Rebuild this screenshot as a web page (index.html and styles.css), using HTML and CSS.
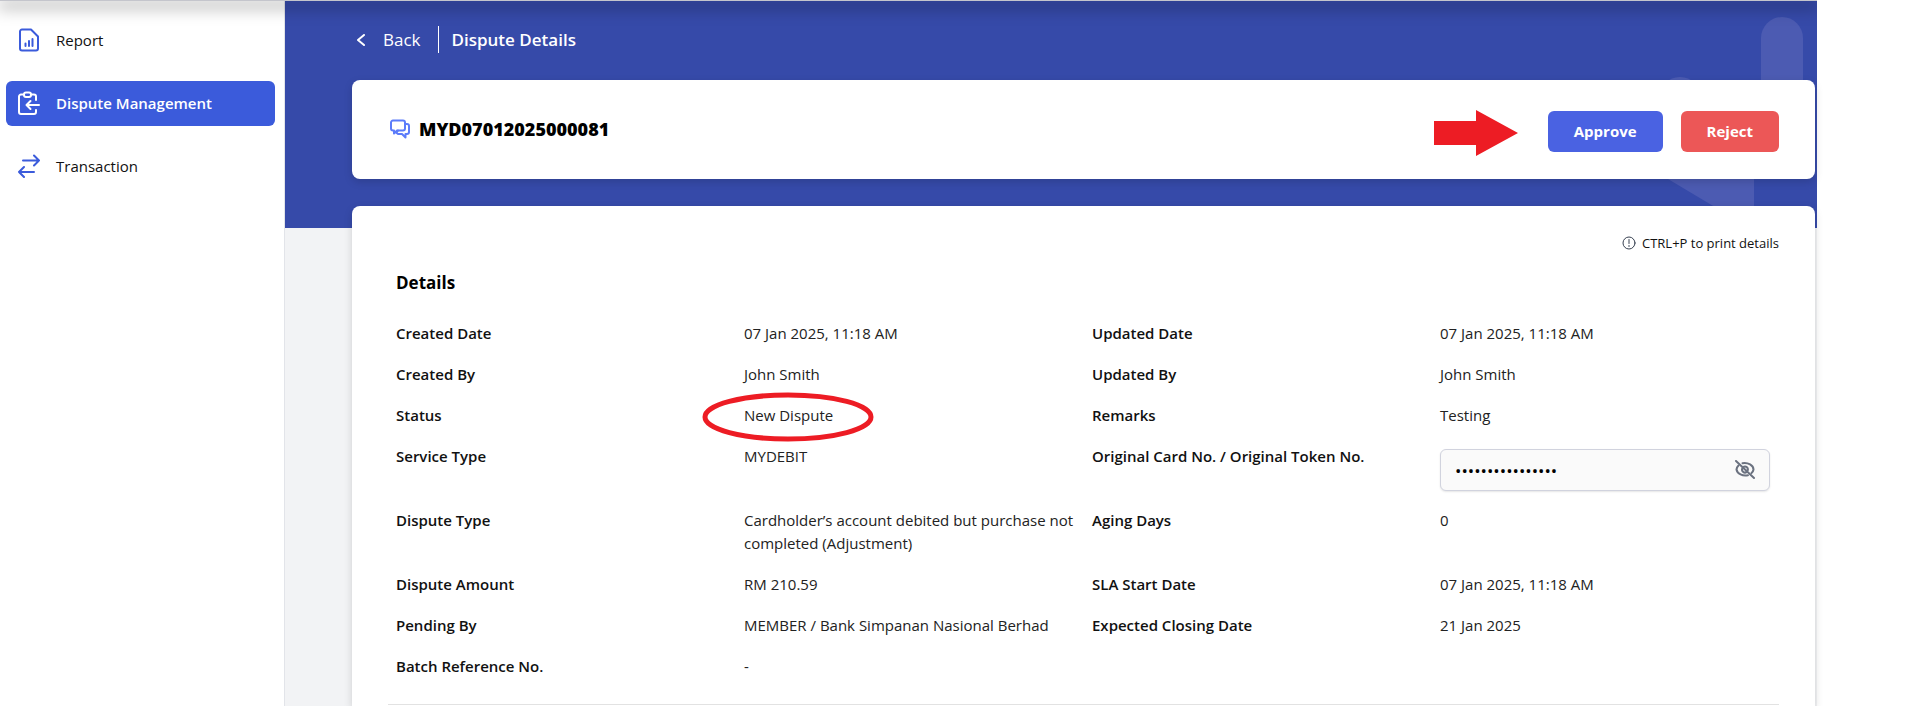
FILE: index.html
```html
<!DOCTYPE html>
<html lang="en">
<head>
  <title>Dispute Details</title>
  <meta charset="UTF-8" />
  <meta name="viewport" content="width=device-width, initial-scale=1.0" />
  <link rel="stylesheet" href="styles.css">
</head>
<body>

  <header class="topbar"></header>

  <div class="layout">
    <!-- Side menu -->
    <nav class="sidebar">
      <a href="#" class="menu-item">
        <svg class="menu-icon" viewBox="0 0 24 24">
          <path d="M5 1.500h9l7 7v12a2 2 0 0 1-2 2H5a2 2 0 0 1-2-2v-17a2 2 0 0 1 2-2z" />
          <path d="M8.500 18v-2.500M12 18v-5M15.500 18v-7" />
        </svg>
        Report
      </a>
      <a href="#" class="menu-item active">
        <svg class="menu-icon" viewBox="0 0 24 24">
          <path d="M7 3.500H4a2 2 0 0 0-2 2V21a2 2 0 0 0 2 2h13a2 2 0 0 0 2-2v-2M14 3.500h3a2 2 0 0 1 2 2V9" />
          <rect x="7" y="1.500" width="7" height="4.500" rx="2" />
          <path d="M22 14H10M13.500 10l-4 4 4 4" />
        </svg>
        Dispute Management
      </a>
      <a href="#" class="menu-item">
        <svg class="menu-icon" viewBox="0 0 24 24">
          <path d="M6 6.500h16M17 1.500l5 5-5 5M17 18H2M7 13l-5 5 5 5" />
        </svg>
        Transaction
      </a>
    </nav>

    <main class="content">
      <!-- Faded shapes on the banner -->
      <svg class="banner-shapes" viewBox="0 0 160 227">
        <path d="M104 37a21 21 0 0 1 42 0v90h-42z" />
        <circle cx="23" cy="97" r="21" />
        <path d="M11 178h86v49h-4z" />
      </svg>

      <div class="page-title">
        <a href="#" class="back">
          <svg class="back-icon" viewBox="0 0 8 12"><path d="M7 1L1 6l6 5" /></svg>
          Back
        </a>
        <h1>Dispute Details</h1>
      </div>

      <section class="card dispute-bar">
        <h2 class="dispute-id">
          <svg class="chat-icon" viewBox="0 0 20 20">
            <path d="M3 1.500h10a2 2 0 0 1 2 2v6a2 2 0 0 1-2 2H7l-3 3v-3H3a2 2 0 0 1-2-2v-6a2 2 0 0 1 2-2z" />
            <path d="M15 5h2a2 2 0 0 1 2 2v6a2 2 0 0 1-2 2h-1.500v3.500L12 15H8l-1.500-1 1.500-2.500" />
          </svg>
          MYD07012025000081
        </h2>
        <div class="actions">
          <svg class="arrow" viewBox="0 -4 84 50"><path d="M0 11h42V0l42 23-42 23V35H0z" /></svg>
          <button type="button" class="btn approve">Approve</button>
          <button type="button" class="btn reject">Reject</button>
        </div>
      </section>

      <section class="card details">
        <p class="print-hint">
          <svg class="hint-icon" viewBox="0 0 14 14">
            <circle cx="7" cy="7" r="6" />
            <path d="M7 3.500v4M7 9.500v1" />
          </svg>
          CTRL+P to print details
        </p>

        <h3>Details</h3>

        <dl class="detail-grid">
          <dt>Created Date</dt>
          <dd>07 Jan 2025, 11:18 AM</dd>
          <dt>Updated Date</dt>
          <dd>07 Jan 2025, 11:18 AM</dd>

          <dt>Created By</dt>
          <dd>John Smith</dd>
          <dt>Updated By</dt>
          <dd>John Smith</dd>

          <dt>Status</dt>
          <dd class="status">
            New Dispute
            <svg class="status-ring" viewBox="0 0 172 50"><ellipse cx="86" cy="25" rx="83" ry="22" /></svg>
          </dd>
          <dt>Remarks</dt>
          <dd>Testing</dd>

          <dt>Service Type</dt>
          <dd>MYDEBIT</dd>
          <dt><label for="cardNo">Original Card No. / Original Token No.</label></dt>
          <dd class="card-no">
            <input type="password" id="cardNo" value="1234567812345678" readonly>
            <button type="button" class="toggle" aria-label="Show card number">
              <svg viewBox="0 0 20 20">
                <path d="M7.500 3.200A9 6.500 0 0 1 18.500 9.500a6 6 0 0 1-2 3.600M13 15.300a9 7 0 0 1-11.500-5.800A7 7 0 0 1 3.500 5.500" />
                <path d="M1 1l18 17M9 6.600a3 3 0 0 1 3.800 3.600M11.800 12A3 3 0 0 1 7.500 8" />
              </svg>
            </button>
          </dd>

          <dt>Dispute Type</dt>
          <dd>Cardholder’s account debited but purchase not completed (Adjustment)</dd>
          <dt>Aging Days</dt>
          <dd>0</dd>

          <dt>Dispute Amount</dt>
          <dd>RM 210.59</dd>
          <dt>SLA Start Date</dt>
          <dd>07 Jan 2025, 11:18 AM</dd>

          <dt>Pending By</dt>
          <dd>MEMBER / Bank Simpanan Nasional Berhad</dd>
          <dt>Expected Closing Date</dt>
          <dd>21 Jan 2025</dd>

          <dt>Batch Reference No.</dt>
          <dd>-</dd>
        </dl>

        <hr>
      </section>
    </main>
  </div>

</body>
</html>
```
FILE: styles.css
```css
* {
  box-sizing: border-box;
}

body {
  margin: 0;
  padding-right: 93px;
  height: 100vh;
  overflow: hidden;
  display: flex;
  flex-direction: column;
  font-family: "Open Sans", "Noto Sans", sans-serif;
  font-size: 15px;
  color: #111;
  background: #fff;
}

h1, h2, h3, p, dl, dd {
  margin: 0;
}

svg {
  fill: none;
  stroke: currentColor;
  stroke-linecap: round;
  stroke-linejoin: round;
}

/* Thin bar with a shadow over the page */
.topbar {
  position: relative;
  z-index: 2;
  flex: none;
  height: 1px;
  background: #c4c5cc;
  box-shadow: 0 4px 16px 2px rgba(0, 0, 0, 0.5);
  clip-path: inset(0 0 -30px 0);
}

.layout {
  flex: 1;
  display: flex;
}

/* Side menu */
.sidebar {
  flex: none;
  width: 285px;
  padding: 17px 9px 0 6px;
  border-right: 1px solid #e2e4e9;
  display: flex;
  flex-direction: column;
  gap: 18px;
}

.menu-item {
  display: flex;
  align-items: center;
  gap: 15px;
  height: 45px;
  padding: 0 11px 1px;
  border-radius: 6px;
  color: #111;
  font-weight: 500;
  text-decoration: none;
}

.menu-icon {
  width: 24px;
  height: 24px;
  stroke-width: 2;
  color: #3b5bdb;
}

.active {
  background: #3b5bdb;
  color: #fff;
  font-weight: 600;
}

.active .menu-icon {
  color: #fff;
}

/* Main area, with the blue banner behind the top */
.content {
  position: relative;
  flex: 1;
  min-width: 0;
  padding: 25px 2px 0 67px;
  display: flex;
  flex-direction: column;
  background: linear-gradient(#364aa9, #364aa9) no-repeat 0 0 / 100% 227px #f2f3f5;
}

.banner-shapes {
  position: absolute;
  top: 0;
  right: 0;
  width: 160px;
  height: 227px;
  stroke: none;
  fill: #4c5bb2;
}

.page-title {
  display: flex;
  align-items: center;
  height: 27px;
  margin-bottom: 27px;
  color: #fff;
}

.back {
  display: flex;
  align-items: center;
  gap: 18px;
  height: 27px;
  padding: 0 17px 0 5px;
  border-right: 1px solid #fff;
  color: #fff;
  font-size: 17px;
  text-decoration: none;
}

.back-icon {
  width: 8px;
  height: 12px;
  stroke-width: 2;
}

h1 {
  padding-left: 13px;
  font-size: 17px;
  font-weight: 600;
}

.card {
  position: relative;
  border-radius: 8px;
  background: #fff;
  box-shadow: 0 3px 8px rgba(0, 0, 0, 0.15);
}

.dispute-bar {
  display: flex;
  justify-content: space-between;
  align-items: center;
  margin-bottom: 27px;
  padding: 26px 36px 23px 38px;
}

.dispute-id {
  display: flex;
  align-items: center;
  gap: 9px;
  padding-bottom: 4px;
  color: #000;
  font-size: 18px;
  font-weight: 800;
}

.chat-icon {
  width: 20px;
  height: 20px;
  stroke-width: 2;
  color: #5c7cfa;
}

.actions {
  display: flex;
  align-items: center;
}

.arrow {
  width: 84px;
  height: 50px;
  margin-right: 30px;
  stroke: none;
  fill: #ed1c24;
}

.btn {
  height: 41px;
  padding: 0 26px;
  border: 0;
  border-radius: 6px;
  color: #fff;
  font-family: inherit;
  font-size: 15px;
  font-weight: 700;
}

.approve {
  background: #4a62e2;
}

.reject {
  margin-left: 18px;
  background: #ec5757;
}

/* Details card, runs off the bottom of the page */
.details {
  flex: 1;
  padding: 27px 36px 0;
  border-radius: 8px 8px 0 0;
}

.print-hint {
  display: flex;
  justify-content: flex-end;
  align-items: center;
  gap: 6px;
  font-size: 13px;
  line-height: 20px;
}

.hint-icon {
  width: 14px;
  height: 14px;
  color: #374151;
}

h3 {
  padding: 18px 8px 0;
  color: #000;
  font-size: 17px;
  font-weight: 700;
  line-height: 24px;
}

.detail-grid {
  display: grid;
  grid-template-columns: repeat(4, 1fr);
  gap: 18px;
  padding: 27px 9px 0 8px;
  line-height: 23px;
}

dt {
  font-weight: 600;
}

dd {
  color: #222;
}

.status {
  position: relative;
}

.status-ring {
  position: absolute;
  left: -42px;
  top: -12px;
  width: 172px;
  height: 50px;
  stroke: #ed1c24;
  stroke-width: 5;
}

.card-no {
  display: flex;
  align-items: center;
  height: 42px;
  margin-top: 4px;
  padding: 0 13px 0 14px;
  border: 1px solid #d1d3de;
  border-radius: 6px;
  background: #fafafa;
  box-shadow: 0 1px 2px rgba(0, 0, 0, 0.1);
}

.card-no input {
  flex: 1;
  min-width: 0;
  padding: 0;
  border: 0;
  outline: 0;
  background: none;
  color: #000;
  font-family: inherit;
  font-size: 17px;
}

.toggle {
  display: flex;
  padding: 0;
  border: 0;
  background: none;
  color: #6b7280;
}

.toggle svg {
  width: 22px;
  height: 20px;
  stroke-width: 2;
}

hr {
  margin: 26px 0 0;
  border: 0;
  border-top: 1px solid #e2e2e2;
}
```
